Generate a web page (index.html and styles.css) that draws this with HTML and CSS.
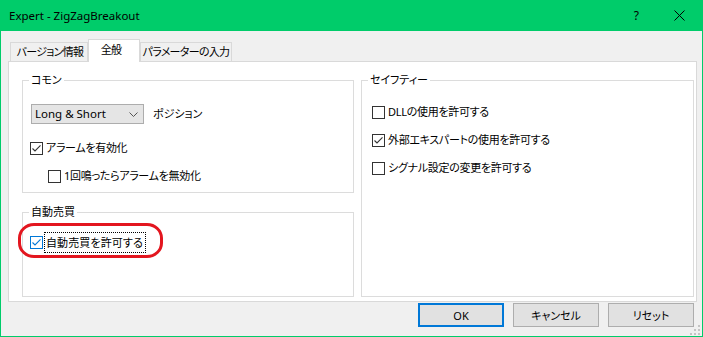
FILE: index.html
```html
<!DOCTYPE html>
<html lang="ja">
<head>
<meta charset="utf-8">
<title>Expert - ZigZagBreakout</title>
<link rel="stylesheet" href="styles.css">
</head>
<body>
<div class="window">
  <div class="titlebar">
    <span class="title">Expert - ZigZagBreakout</span>
    <span class="help">?</span>
    <svg class="close" width="11" height="11" viewBox="0 0 11 11"><path d="M0.5 0.5 L10.5 10.5 M10.5 0.5 L0.5 10.5" stroke="#000" stroke-width="1" fill="none"/></svg>
  </div>
  <div class="body">
    <div class="tabs">
      <div class="tab tab-version">バージョン情報</div>
      <div class="tab tab-general active">全般</div>
      <div class="tab tab-params">パラメーターの入力</div>
    </div>
    <div class="panel">
      <div class="col-left">
        <div class="group g-common">
          <span class="legend">コモン</span>
          <div class="select-row">
            <div class="select">
              <span>Long &amp; Short</span>
              <svg width="9" height="5" viewBox="0 0 9 5"><path d="M0.5 0.5 L4.5 4.5 L8.5 0.5" stroke="#555" stroke-width="1" fill="none"/></svg>
            </div>
            <span class="select-label">ポジション</span>
          </div>
          <div class="check row-alarm">
            <span class="box"><svg width="11" height="11" viewBox="0 0 11 11"><path d="M1.5 5.5 L4 8 L9.5 2.3" stroke="#333" stroke-width="1.1" fill="none"/></svg></span>
            <span class="lbl">アラームを有効化</span>
          </div>
          <div class="check row-once">
            <span class="box"></span>
            <span class="lbl">1回鳴ったらアラームを無効化</span>
          </div>
        </div>
        <div class="group g-auto">
          <span class="legend">自動売買</span>
          <div class="check focused">
            <span class="box"><svg width="11" height="11" viewBox="0 0 11 11"><path d="M1.5 5.5 L4 8 L9.5 2.3" stroke="#0078d7" stroke-width="1.1" fill="none"/></svg></span>
            <span class="lbl">自動売買を許可する</span>
          </div>
          <div class="highlight"></div>
        </div>
      </div>
      <div class="group g-safety">
        <span class="legend">セイフティー</span>
        <div class="check">
          <span class="box"></span>
          <span class="lbl">DLLの使用を許可する</span>
        </div>
        <div class="check">
          <span class="box"><svg width="11" height="11" viewBox="0 0 11 11"><path d="M1.5 5.5 L4 8 L9.5 2.3" stroke="#333" stroke-width="1.1" fill="none"/></svg></span>
          <span class="lbl">外部エキスパートの使用を許可する</span>
        </div>
        <div class="check">
          <span class="box"></span>
          <span class="lbl">シグナル設定の変更を許可する</span>
        </div>
      </div>
    </div>
    <div class="buttons">
      <button class="btn default">OK</button>
      <button class="btn">キャンセル</button>
      <button class="btn">リセット</button>
    </div>
  </div>
  <svg class="grip" width="10" height="10" viewBox="0 0 10 10">
    <rect x="8" y="0" width="2" height="2" fill="#c4c4c4"/>
    <rect x="8" y="4" width="2" height="2" fill="#c4c4c4"/>
    <rect x="4" y="4" width="2" height="2" fill="#c4c4c4"/>
    <rect x="8" y="8" width="2" height="2" fill="#c4c4c4"/>
    <rect x="4" y="8" width="2" height="2" fill="#c4c4c4"/>
    <rect x="0" y="8" width="2" height="2" fill="#c4c4c4"/>
  </svg>
</div>
</body>
</html>
```
FILE: styles.css
```css
html, body {
  margin: 0;
  padding: 0;
  background: #f0f0f0;
}
body {
  font-family: "Noto Sans", "Noto Sans CJK JP", sans-serif;
  font-size: 11px;
  line-height: 16px;
  color: #000;
  font-feature-settings: "palt";
}
.window {
  width: 703px;
  height: 337px;
  box-sizing: border-box;
  border: 1px solid #00cc6a;
  border-top: 0;
  background: #f0f0f0;
  position: relative;
}
.titlebar {
  height: 31px;
  background: #00cc6a;
  display: flex;
  align-items: center;
  padding: 0 17px 0 8px;
}
.title {
  flex: 1;
  font-size: 11.5px;
}
.help {
  margin-right: 35px;
  font-size: 12px;
}
.close {
  display: block;
}
.body {
  padding: 8px 0 0 7px;
}
.tabs {
  display: flex;
  align-items: flex-end;
  height: 22px;
  padding-left: 2px;
}
.tab {
  box-sizing: border-box;
  height: 19px;
  border: 1px solid #d9d9d9;
  border-bottom: 0;
  background: #f0f0f0;
  display: flex;
  align-items: center;
  justify-content: center;
  white-space: nowrap;
  letter-spacing: -0.7px;
}
.tab-version { width: 78px; padding-left: 2px; }
.tab-general { width: 52px; padding-right: 6px; }
.tab-params { width: 92px; }
.tab.active {
  height: 23px;
  margin-bottom: -1px;
  background: #fff;
  position: relative;
  z-index: 1;
  padding-bottom: 2px;
}
.panel {
  box-sizing: border-box;
  width: 689px;
  height: 241px;
  background: #fff;
  border: 1px solid #d9d9d9;
  display: flex;
  gap: 7px;
  padding: 18px 0 0 13px;
}
.col-left {
  display: flex;
  flex-direction: column;
  gap: 19px;
  width: 332px;
}
.group {
  box-sizing: border-box;
  border: 1px solid #dcdcdc;
  position: relative;
}
.legend {
  position: absolute;
  top: -9px;
  left: 6px;
  padding: 0 2px;
  background: #fff;
  white-space: nowrap;
}
.g-common {
  height: 113px;
  padding: 23px 0 0 7px;
}
.g-auto {
  height: 85px;
  padding: 19px 0 0 7px;
}
.g-safety {
  width: 333px;
  height: 217px;
  padding: 21px 0 0 10px;
  display: flex;
  flex-direction: column;
  gap: 8px;
}
.select-row {
  display: flex;
  align-items: center;
  height: 20px;
  margin-left: 1px;
}
.select {
  box-sizing: border-box;
  width: 113px;
  height: 20px;
  border: 1px solid #adadad;
  background: #e5e5e5;
  display: flex;
  align-items: center;
  justify-content: space-between;
  padding: 0 5px 0 3px;
  font-size: 11.5px;
}
.select svg {
  display: block;
}
.select-label {
  margin-left: 9px;
}
.check {
  display: flex;
  align-items: center;
  height: 20px;
  white-space: nowrap;
}
.row-alarm {
  margin-top: 14px;
}
.row-once {
  margin-top: 8px;
  padding-left: 18px;
}
.box {
  box-sizing: border-box;
  width: 13px;
  height: 13px;
  border: 1px solid #333;
  background: #fff;
  flex: none;
}
.box svg {
  display: block;
}
.lbl {
  margin-left: 3px;
  letter-spacing: -0.3px;
}
.focused .box {
  border-color: #0078d7;
}
.focused .lbl {
  margin-left: 2px;
  padding: 1px 2px 1px 1px;
  outline: 1px dotted #000;
  outline-offset: 0;
  line-height: 17px;
  letter-spacing: 0.1px;
}
.highlight {
  position: absolute;
  left: -5px;
  top: 10px;
  width: 145px;
  height: 35px;
  box-sizing: border-box;
  border: 3px solid #e3161f;
  border-radius: 16px / 15px;
}
.buttons {
  display: flex;
  justify-content: flex-end;
  gap: 9px;
  margin-top: 1px;
  padding-right: 8px;
}
.btn {
  box-sizing: border-box;
  width: 86px;
  height: 24px;
  border: 1px solid #adadad;
  background: #e1e1e1;
  font-family: "Noto Sans", "Noto Sans CJK JP", sans-serif;
  font-size: 11px;
  font-feature-settings: "palt";
  color: #000;
  padding: 0;
}
.btn.default {
  border: 2px solid #0078d7;
}
.grip {
  position: absolute;
  right: 2px;
  bottom: 1px;
}
```
